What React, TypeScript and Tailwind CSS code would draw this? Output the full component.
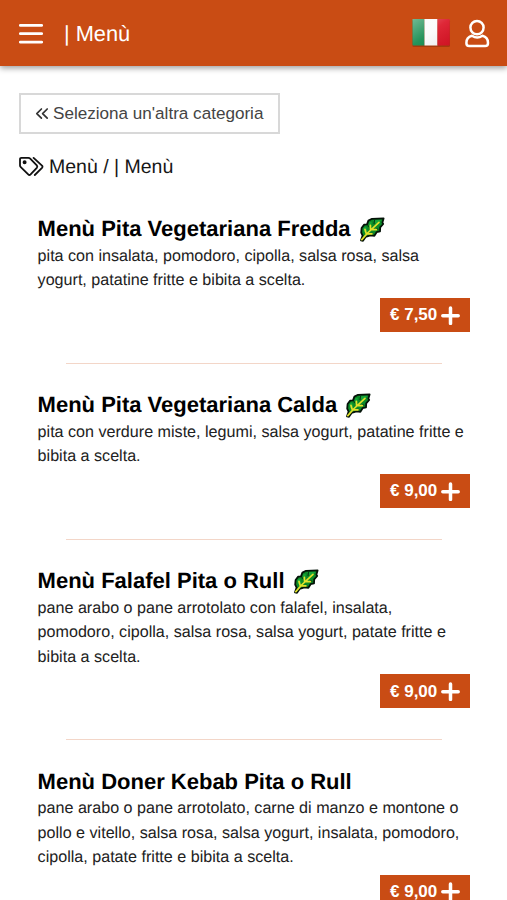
import React from "react";

type Item = { title: string; veg?: boolean; lines: string[]; price: string };

const items: Item[] = [
  {
    title: "Menù Pita Vegetariana Fredda",
    veg: true,
    lines: ["pita con insalata, pomodoro, cipolla, salsa rosa, salsa", "yogurt, patatine fritte e bibita a scelta."],
    price: "€ 7,50",
  },
  {
    title: "Menù Pita Vegetariana Calda",
    veg: true,
    lines: ["pita con verdure miste, legumi, salsa yogurt, patatine fritte e", "bibita a scelta."],
    price: "€ 9,00",
  },
  {
    title: "Menù Falafel Pita o Rull",
    veg: true,
    lines: [
      "pane arabo o pane arrotolato con falafel, insalata,",
      "pomodoro, cipolla, salsa rosa, salsa yogurt, patate fritte e",
      "bibita a scelta.",
    ],
    price: "€ 9,00",
  },
  {
    title: "Menù Doner Kebab Pita o Rull",
    lines: [
      "pane arabo o pane arrotolato, carne di manzo e montone o",
      "pollo e vitello, salsa rosa, salsa yogurt, insalata, pomodoro,",
      "cipolla, patate fritte e bibita a scelta.",
    ],
    price: "€ 9,00",
  },
];

function Leaf() {
  return (
    <svg className="ml-[8px] h-[25px] w-[26px] shrink-0" viewBox="0 0 26 25">
      <path
        d="M2 23.4 L3.6 18.6 L2.2 15.6 L2.6 11 L5.2 7.6 L8 7.4 L9.4 3.6 L13 1.8 L24.6 1.4 L23.4 5.6 L24.2 7 L21.2 10.4 L21 14.4 L17.6 15.2 L15.4 18.8 L11.4 18.4 L6.6 20 L4 23.8 Z"
        fill="#0c8a27"
        stroke="#041208"
        strokeWidth="1.8"
        strokeLinejoin="round"
      />
      <path d="M14 3.2 L22.6 2.8 L17.4 7.4 Z M10.2 5.2 L12.8 4.8 L12 10.6 L9.6 9.4 Z M4.4 11 L7 9.4 L8.4 14 L5 15.6 Z" fill="#16a638" />
      <path d="M15.6 3 L15 7 M8.8 8 L9.6 10 M19.4 12.6 L17 11.6 M14 17.4 L12.6 15.8" stroke="#063d14" strokeWidth="1.1" />
      <path
        d="M2.8 22.6 L8.6 16 L20 5.4 M7.4 17 L6 12.4 M11.6 13 L11.4 8.4 M8 16.8 L13 16.8 M12.4 12.6 L17.4 12.6"
        fill="none"
        stroke="#e3e12a"
        strokeWidth="1.7"
        strokeLinecap="round"
      />
    </svg>
  );
}

function Flag() {
  return (
    <svg className="h-[32px] w-[40px]" viewBox="0 0 40 32">
      <defs>
        <linearGradient id="gloss" x1="0" y1="0" x2="1" y2="1">
          <stop offset="0" stopColor="#fff" stopOpacity=".4" />
          <stop offset=".5" stopColor="#fff" stopOpacity=".08" />
          <stop offset="1" stopColor="#000" stopOpacity=".06" />
        </linearGradient>
      </defs>
      <rect x="0.4" y="3" width="37.6" height="27" rx="1.5" fill="#8e3008" opacity=".6" />
      <path d="M1.5 2 H12.5 V28.5 H1.5 Q0.5 28.5 0.5 27.5 V3 Q0.5 2 1.5 2Z" fill="#128a4c" />
      <path d="M12.5 2 H25.5 V28.5 H12.5Z" fill="#fbfbfb" />
      <path d="M25.5 2 H36.8 Q37.8 2 37.8 3 V27.5 Q37.8 28.5 36.8 28.5 H25.5Z" fill="#dc1526" />
      <rect x="0.5" y="2" width="37.3" height="26.5" fill="url(#gloss)" />
    </svg>
  );
}

export default function App() {
  return (
    <div className="h-[900px] w-[507px] overflow-hidden bg-white font-['Liberation_Sans',Arial,sans-serif] text-black [text-rendering:geometricPrecision]">
      <header className="flex h-[66px] items-center bg-[#c94c14] pl-[19px] pr-[17px] text-white shadow-[0_2px_6px_rgba(0,0,0,0.4)]">
        <svg className="mt-[2px] h-[22px] w-6" viewBox="0 0 24 22" stroke="#fff" strokeWidth="2.8" strokeLinecap="round">
          <path d="M1.3 2.4H22.7M1.3 10.7H22.7M1.3 19.2H22.7" />
        </svg>
        <span className="ml-[21px] mt-[2px] flex-1 text-[21.8px] leading-[26px]">| Menù</span>
        <Flag />
        <svg className="ml-[13px] mt-[2px] h-[30px] w-[25px]" viewBox="0 0 25 30" fill="none" stroke="#fff" strokeWidth="2.5">
          <circle cx="12" cy="8.6" r="6.6" />
          <path d="M7 16.8 C3.2 17.8 1.4 20.4 1.4 23.9 Q1.4 27 4.2 27 H20.2 Q23 27 23 23.9 C23 20.4 21.2 17.8 17.4 16.8 Q12.2 20.4 7 16.8Z" strokeLinejoin="round" />
        </svg>
      </header>

      <main className="px-[19px] pt-[27px]">
        <button className="flex h-[41px] w-[261px] items-center border-2 border-[#d8d8d8] pl-[14px] text-[17.1px] text-[#444]">
          <svg className="mr-1 h-[14px] w-[14px] shrink-0" viewBox="0 0 14 14" fill="none" stroke="#333" strokeWidth="1.7" strokeLinecap="round" strokeLinejoin="round">
            <path d="M6.4 2L1.8 6.6L6.4 11.2M12.2 2L7.6 6.6L12.2 11.2" />
          </svg>
          <span className="whitespace-nowrap">Seleziona un'altra categoria</span>
        </button>

        <div className="mt-5 flex h-[27px] items-center text-[19.5px] text-[#161616]">
          <svg className="mr-[5px] mb-px h-[22px] w-[25px]" viewBox="0 0 25 22" fill="none" stroke="#111" strokeWidth="1.8" strokeLinecap="round" strokeLinejoin="round">
            <path d="M1 3.2 Q1 1.8 2.4 1.8 H9.4 Q10.4 1.8 11.2 2.6 L17.8 9.4 Q18.8 10.6 17.8 11.8 L11.6 18.4 Q10.4 19.6 9.2 18.4 L1.8 11.2 Q1 10.4 1 9.4Z" />
            <path d="M14.6 1.9 L23 9.6 Q24 10.7 23 11.8 L15.8 19" />
            <circle cx="5.6" cy="6.2" r="1.1" fill="#111" />
          </svg>
          <span>Menù / | Menù</span>
        </div>

        <section className="pl-[18.6px] pr-[18px] pt-[34px]">
          {items.map((item) => (
            <article key={item.title} className="pb-[27.5px]">
              <h2 className="flex h-[28.8px] items-center whitespace-nowrap text-[22px] font-bold leading-[28px]">
                {item.title}
                {item.veg && <Leaf />}
              </h2>
              <p className="whitespace-nowrap text-[16.13px] leading-[24.4px] text-[#222]">
                {item.lines.map((line) => (
                  <span key={line} className="block">{line}</span>
                ))}
              </p>
              <div className="mt-[5.4px] flex justify-end">
                <button className="flex h-[34px] w-[90px] items-center bg-[#c94c14] pl-[10px] text-[17px] font-bold text-white">
                  <span className="whitespace-nowrap">{item.price}</span>
                  <svg className="ml-[4px] h-[19px] w-[19px] shrink-0" viewBox="0 0 19 19" stroke="#fff" strokeWidth="3.5" strokeLinecap="round">
                    <path d="M9.5 2V17.4M1.8 9.7H17.2" />
                  </svg>
                </button>
              </div>
              <div className="mx-7 mt-[30.5px] h-px bg-[#f3d6c8]" />
            </article>
          ))}
        </section>
      </main>
    </div>
  );
}
